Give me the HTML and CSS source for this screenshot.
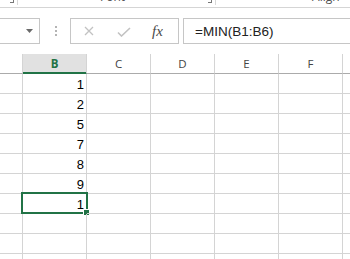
FILE: index.html
```html
<!DOCTYPE html>
<html lang="en">
<head>
    <meta charset="UTF-8">
    <title>Sheet1 - MIN</title>
    <link rel="stylesheet" href="styles.css">
</head>
<body>
<div class="ribbon">
    <span class="launcher first"></span>
    <span class="rib-sep"></span>
    <span class="rib-label font-label">Font</span>
    <span class="launcher second"></span>
    <span class="rib-sep"></span>
    <span class="rib-label align-label">Align</span>
</div>

<div class="formula-bar">
    <div class="name-box">
        <svg class="arrow" width="7" height="4" viewBox="0 0 7 4"><path d="M0 0h7L3.5 4z" fill="#6a6a6a"/></svg>
    </div>
    <div class="grip"><i></i><i></i><i></i></div>
    <div class="fx-box">
        <svg class="ico-cancel" width="10" height="10" viewBox="0 0 10 10"><path d="M1 1l8 8M9 1l-8 8" stroke="#c2c2c2" stroke-width="1.3" fill="none"/></svg>
        <svg class="ico-enter" width="14" height="10" viewBox="0 0 14 10"><path d="M1 5.5l3.5 3.5L13 1" stroke="#c2c2c2" stroke-width="1.6" fill="none"/></svg>
        <span class="fx">fx</span>
    </div>
    <div class="formula">=MIN(B1:B6)</div>
</div>

<div class="sheet">
    <div class="row head">
        <div class="rh"></div>
        <div class="ch active">B</div>
        <div class="ch">C</div>
        <div class="ch">D</div>
        <div class="ch">E</div>
        <div class="ch">F</div>
        <div class="ch last"></div>
    </div>
    <div class="row"><div class="rh"></div><div class="cell">1</div><div class="cell"></div><div class="cell"></div><div class="cell"></div><div class="cell"></div><div class="cell last"></div></div>
    <div class="row"><div class="rh"></div><div class="cell">2</div><div class="cell"></div><div class="cell"></div><div class="cell"></div><div class="cell"></div><div class="cell last"></div></div>
    <div class="row"><div class="rh"></div><div class="cell">5</div><div class="cell"></div><div class="cell"></div><div class="cell"></div><div class="cell"></div><div class="cell last"></div></div>
    <div class="row"><div class="rh"></div><div class="cell">7</div><div class="cell"></div><div class="cell"></div><div class="cell"></div><div class="cell"></div><div class="cell last"></div></div>
    <div class="row"><div class="rh"></div><div class="cell">8</div><div class="cell"></div><div class="cell"></div><div class="cell"></div><div class="cell"></div><div class="cell last"></div></div>
    <div class="row"><div class="rh"></div><div class="cell">9</div><div class="cell"></div><div class="cell"></div><div class="cell"></div><div class="cell"></div><div class="cell last"></div></div>
    <div class="row"><div class="rh"></div><div class="cell selected">1<span class="sel-box"></span><span class="fill-handle"></span></div><div class="cell"></div><div class="cell"></div><div class="cell"></div><div class="cell"></div><div class="cell last"></div></div>
    <div class="row"><div class="rh"></div><div class="cell"></div><div class="cell"></div><div class="cell"></div><div class="cell"></div><div class="cell"></div><div class="cell last"></div></div>
    <div class="row"><div class="rh"></div><div class="cell"></div><div class="cell"></div><div class="cell"></div><div class="cell"></div><div class="cell"></div><div class="cell last"></div></div>
    <div class="row"><div class="rh"></div><div class="cell"></div><div class="cell"></div><div class="cell"></div><div class="cell"></div><div class="cell"></div><div class="cell last"></div></div>
</div>
</body>
</html>
```

FILE: styles.css
```css
body {
    margin: 0;
    background: #fff;
    font-family: "Liberation Sans", Arial, sans-serif;
    overflow: hidden;
    width: 350px;
    height: 259px;
}

/* ribbon (bottom edge only) */
.ribbon {
    height: 7px;
    border-bottom: 1px solid #d5d5d5;
    display: flex;
    align-items: flex-start;
    overflow: hidden;
}
.launcher {
    width: 4px;
    height: 3px;
    border-right: 1px solid #777;
    border-bottom: 1px solid #777;
    box-sizing: border-box;
}
.launcher.first {
    margin-left: 10px;
}
.launcher.second {
    margin-left: 83px;
}
.rib-sep {
    width: 1px;
    height: 5px;
    background: #d8d8d8;
    margin-left: 3px;
}
.rib-label {
    font-family: "Open Sans", sans-serif;
    font-size: 12px;
    line-height: 12px;
    color: #505050;
    margin-top: -9px;
}
.font-label {
    margin-left: 82px;
}
.align-label {
    margin-left: 96px;
}

/* formula bar */
.formula-bar {
    display: flex;
    height: 26px;
    margin-top: 10px;
}
.name-box {
    width: 40px;
    height: 26px;
    box-sizing: border-box;
    border: 1px solid #c6c6c6;
    border-left: none;
    display: flex;
    align-items: center;
    justify-content: flex-end;
    padding-right: 6px;
}
.grip {
    display: flex;
    flex-direction: column;
    justify-content: center;
    gap: 2px;
    margin-left: 15px;
    width: 2px;
}
.grip i {
    display: block;
    width: 2px;
    height: 2px;
    background: #b4b4b4;
}
.fx-box {
    margin-left: 13px;
    width: 109px;
    height: 26px;
    box-sizing: border-box;
    border: 1px solid #c6c6c6;
    display: flex;
    align-items: center;
}
.ico-cancel {
    margin-left: 13px;
}
.ico-enter {
    margin-left: 23px;
    margin-top: 2px;
}
.fx {
    margin-left: 21px;
    font-family: "Liberation Serif", serif;
    font-style: italic;
    font-size: 15px;
    color: #4a4a4a;
}
.formula {
    margin-left: 4px;
    flex: 1;
    margin-right: -2px;
    height: 26px;
    box-sizing: border-box;
    border: 1px solid #c6c6c6;
    padding: 2px 0 0 11px;
    font-size: 13.5px;
    line-height: 22px;
    color: #222;
}

/* grid */
.sheet {
    margin-top: 10px;
}
.row {
    display: flex;
    height: 20px;
}
.row > div {
    box-sizing: border-box;
    height: 20px;
    border-bottom: 1px solid #d4d4d4;
    border-right: 1px solid #d4d4d4;
    flex: none;
}
.rh {
    width: 23px;
}
.ch, .cell {
    width: 64px;
}
.row > .last {
    width: 30px;
}
.head > div {
    border-bottom-color: #ababab;
}
.ch {
    font-family: "Open Sans", sans-serif;
    font-size: 11.5px;
    line-height: 19px;
    text-align: center;
    color: #444;
}
.ch.active {
    background: #e1e1e1;
    color: #217346;
    font-weight: bold;
    border-bottom-color: #217346;
    box-shadow: inset 0 -1px 0 #217346;
}
.cell {
    position: relative;
    text-align: right;
    padding: 2px 2px 0 0;
    font-size: 13px;
    line-height: 18px;
    color: #000;
}
.sel-box {
    position: absolute;
    left: -2px;
    top: -2px;
    width: 67px;
    height: 22px;
    box-sizing: border-box;
    border: 2px solid #217346;
}
.fill-handle {
    position: absolute;
    left: 60px;
    top: 15px;
    width: 7px;
    height: 7px;
    box-sizing: border-box;
    background: #217346;
    border: 1px solid #fff;
}
```
